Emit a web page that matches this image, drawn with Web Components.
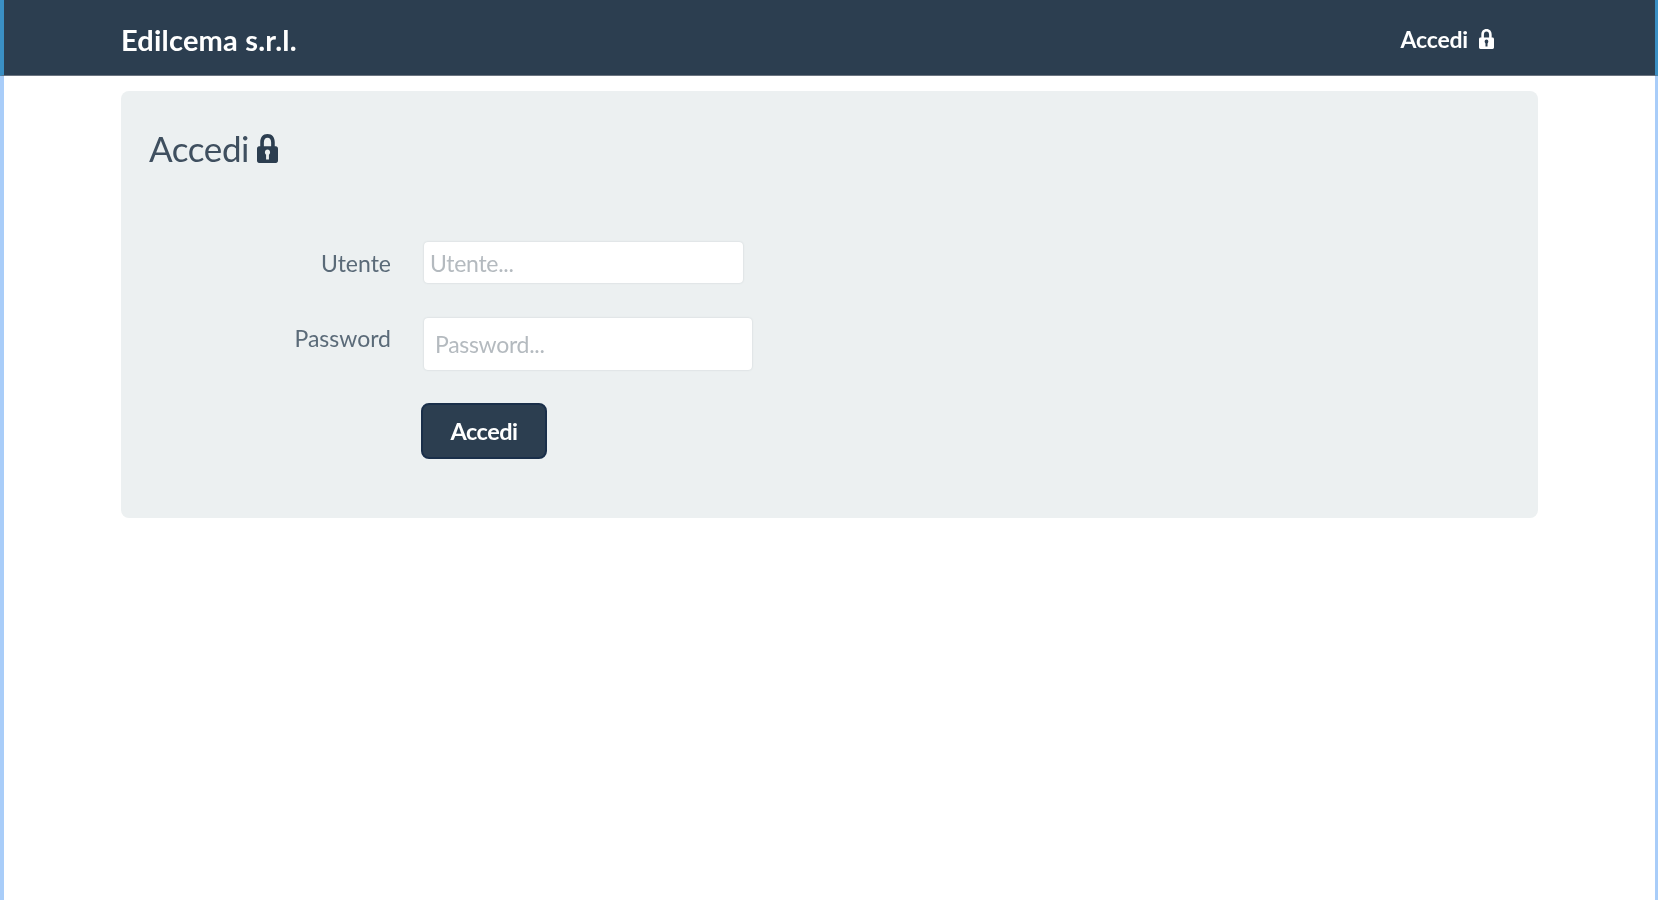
<!DOCTYPE html>
<html lang="it">
<head>
<meta charset="utf-8">
<title>Edilcema s.r.l.</title>
<style>
  html, body { margin: 0; height: 100%; }
  body { font-family: Lato, "Open Sans", sans-serif; color: #2c3e50; background: #fff; }
</style>
</head>
<body>
<ed-app></ed-app>

<script>
class LockIcon extends HTMLElement {
  constructor() {
    super();
    this.attachShadow({ mode: 'open' });
    this.shadowRoot.innerHTML = `
      <style>
        :host { display: inline-flex; width: var(--lock-width, 16px); height: var(--lock-height, 20px); }
        svg { width: 100%; height: 100%; display: block; }
      </style>
      <svg viewBox="0 0 22 26" fill="currentColor" preserveAspectRatio="none">
        <path fill-rule="evenodd" d="M11 0C6 0 3.4 3 3.4 7.4V11H2.2C.9 11 0 11.9 0 13.2v10.6C0 25.1.9 26 2.2 26h17.6c1.3 0 2.2-.9 2.2-2.2V13.2c0-1.3-.9-2.2-2.2-2.2h-1.2V7.4C18.6 3 16 0 11 0zM7.2 11V7.6C7.2 5 8.6 3.4 11 3.4s3.8 1.6 3.8 4.2V11H7.2zM11 13.8c1.6 0 2.7 1.1 2.7 2.6 0 1-.5 1.8-1.2 2.3v4.1h-3v-4.1c-.7-.5-1.2-1.3-1.2-2.3 0-1.5 1.1-2.6 2.7-2.6z"/>
      </svg>`;
  }
}

class NavBar extends HTMLElement {
  constructor() {
    super();
    this.attachShadow({ mode: 'open' });
    this.shadowRoot.innerHTML = `
      <style>
        :host {
          display: flex;
          align-items: center;
          justify-content: space-between;
          box-sizing: border-box;
          height: 76px;
          padding: 3px 161px 0 117px;
          background: #2c3e50;
          color: #fff;
          border-left: 4px solid #3a8fc4;
          border-right: 3px solid #3a8fc4;
          border-bottom: 1px solid #6b7480;
        }
        .brand { font-size: 29px; font-weight: 700; letter-spacing: 0.2px; }
        .link { display: flex; align-items: center; gap: 11px; font-size: 23px; font-weight: 700; letter-spacing: -0.2px; }
        ed-lock { --lock-width: 15px; --lock-height: 20px; }
      </style>
      <div class="brand"><slot name="brand"></slot></div>
      <div class="link"><slot name="link"></slot><ed-lock></ed-lock></div>`;
  }
}

class Jumbotron extends HTMLElement {
  constructor() {
    super();
    this.attachShadow({ mode: 'open' });
    this.shadowRoot.innerHTML = `
      <style>
        :host {
          display: block;
          box-sizing: border-box;
          height: 427px;
          padding: 37px 28px 0;
          background: #ecf0f1;
          border-radius: 8px;
        }
        h2 {
          display: flex;
          align-items: center;
          gap: 8px;
          margin: 0 0 74px;
          height: 40px;
          font-size: 35px;
          font-weight: 400;
          letter-spacing: -0.4px;
          color: #3f4f5f;
        }
        ed-lock { --lock-width: 21px; --lock-height: 29px; color: #2c3e50; }
      </style>
      <h2><slot name="title"></slot><ed-lock></ed-lock></h2>
      <slot></slot>`;
  }
}

class FormRow extends HTMLElement {
  constructor() {
    super();
    this.attachShadow({ mode: 'open' });
    this.shadowRoot.innerHTML = `
      <style>
        :host {
          display: grid;
          grid-template-columns: 242px auto;
          column-gap: 33px;
          align-items: start;
        }
        .label {
          text-align: right;
          font-size: 23px;
          line-height: 26px;
          color: #5a6a78;
        }
        input {
          display: block;
          box-sizing: border-box;
          font: 23px Lato, sans-serif;
          letter-spacing: -0.3px;
          border: 0;
          border-radius: 4px;
          background: #fff;
          outline: none;
          box-shadow: 0 0 2px rgba(44, 62, 80, 0.18);
        }
        input::placeholder { color: #b4babf; opacity: 1; }
      </style>
      <div class="label"></div>
      <input>`;
  }

  connectedCallback() {
    const input = this.shadowRoot.querySelector('input');
    const label = this.shadowRoot.querySelector('.label');
    label.textContent = this.getAttribute('label');
    label.style.marginTop = this.getAttribute('label-top');
    input.placeholder = this.getAttribute('label') + '...';
    input.type = this.getAttribute('type') || 'text';
    input.style.width = this.getAttribute('input-width');
    input.style.height = this.getAttribute('input-height');
    input.style.paddingLeft = this.getAttribute('input-pad');
  }
}

class FormButton extends HTMLElement {
  constructor() {
    super();
    this.attachShadow({ mode: 'open' });
    this.shadowRoot.innerHTML = `
      <style>
        :host { display: block; padding-left: 272px; }
        button {
          box-sizing: border-box;
          width: 126px;
          height: 56px;
          background: #2c3e50;
          color: #fff;
          font: 700 23.5px Lato, sans-serif;
          letter-spacing: -0.5px;
          border: 2px solid #1a2f4a;
          border-radius: 8px;
        }
      </style>
      <button><slot></slot></button>`;
  }
}

class App extends HTMLElement {
  constructor() {
    super();
    this.attachShadow({ mode: 'open' });
    this.shadowRoot.innerHTML = `
      <style>
        :host { display: flex; flex-flow: column; height: 100vh; overflow: hidden; filter: blur(0.6px); }
        main {
          flex: 1 1 auto;
          box-sizing: border-box;
          padding: 15px 117px 0 117px;
          border-left: 4px solid #a9cdf9;
          border-right: 3px solid #a9cdf9;
        }
        .first { margin-bottom: 35px; }
        .second { margin-bottom: 33px; }
      </style>
      <ed-navbar>
        <span slot="brand">Edilcema s.r.l.</span>
        <span slot="link">Accedi</span>
      </ed-navbar>
      <main>
        <ed-jumbotron>
          <span slot="title">Accedi</span>
          <ed-form-row class="first" label="Utente" label-top="8px" input-width="319px" input-height="41px" input-pad="6px"></ed-form-row>
          <ed-form-row class="second" label="Password" label-top="7px" type="password" input-width="328px" input-height="52px" input-pad="11px"></ed-form-row>
          <ed-form-button>Accedi</ed-form-button>
        </ed-jumbotron>
      </main>`;
  }
}

window.customElements.define('ed-lock', LockIcon);
window.customElements.define('ed-navbar', NavBar);
window.customElements.define('ed-jumbotron', Jumbotron);
window.customElements.define('ed-form-row', FormRow);
window.customElements.define('ed-form-button', FormButton);
window.customElements.define('ed-app', App);
</script>
</body>
</html>
